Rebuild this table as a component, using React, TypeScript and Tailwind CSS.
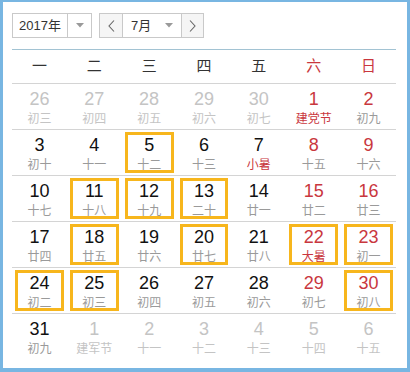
type Day = {
  n: number;
  sub: string;
  other?: boolean;
  red?: boolean;
  fest?: boolean;
  box?: boolean;
};

const weekdays = ['一', '二', '三', '四', '五', '六', '日'];

const rows: Day[][] = [
  [
    { n: 26, sub: '初三', other: true },
    { n: 27, sub: '初四', other: true },
    { n: 28, sub: '初五', other: true },
    { n: 29, sub: '初六', other: true },
    { n: 30, sub: '初七', other: true },
    { n: 1, sub: '建党节', red: true, fest: true },
    { n: 2, sub: '初九', red: true },
  ],
  [
    { n: 3, sub: '初十' },
    { n: 4, sub: '十一' },
    { n: 5, sub: '十二', box: true },
    { n: 6, sub: '十三' },
    { n: 7, sub: '小暑', fest: true },
    { n: 8, sub: '十五', red: true },
    { n: 9, sub: '十六', red: true },
  ],
  [
    { n: 10, sub: '十七' },
    { n: 11, sub: '十八', box: true },
    { n: 12, sub: '十九', box: true },
    { n: 13, sub: '二十', box: true },
    { n: 14, sub: '廿一' },
    { n: 15, sub: '廿二', red: true },
    { n: 16, sub: '廿三', red: true },
  ],
  [
    { n: 17, sub: '廿四' },
    { n: 18, sub: '廿五', box: true },
    { n: 19, sub: '廿六' },
    { n: 20, sub: '廿七', box: true },
    { n: 21, sub: '廿八' },
    { n: 22, sub: '大暑', red: true, fest: true, box: true },
    { n: 23, sub: '初一', red: true, box: true },
  ],
  [
    { n: 24, sub: '初二', box: true },
    { n: 25, sub: '初三', box: true },
    { n: 26, sub: '初四' },
    { n: 27, sub: '初五' },
    { n: 28, sub: '初六' },
    { n: 29, sub: '初七', red: true },
    { n: 30, sub: '初八', red: true, box: true },
  ],
  [
    { n: 31, sub: '初九' },
    { n: 1, sub: '建军节', other: true },
    { n: 2, sub: '十一', other: true },
    { n: 3, sub: '十二', other: true },
    { n: 4, sub: '十三', other: true },
    { n: 5, sub: '十四', other: true },
    { n: 6, sub: '十五', other: true },
  ],
];

function Caret() {
  return (
    <svg width="8" height="5" viewBox="0 0 8 5">
      <path d="M0 0 L8 0 L4 4.5 Z" fill="#9a9a9a" />
    </svg>
  );
}

function Chevron({ dir }: { dir: 'left' | 'right' }) {
  return (
    <svg width="7" height="12" viewBox="0 0 7 12">
      <path
        d={dir === 'left' ? 'M6 0.5 L1 6 L6 11.5' : 'M1 0.5 L6 6 L1 11.5'}
        fill="none"
        stroke="#666"
        strokeWidth="1.1"
      />
    </svg>
  );
}

function Cell({ d }: { d: Day }) {
  const numColor = d.other ? 'text-[#c4c4c4]' : d.red ? 'text-[#c9373e]' : 'text-[#111]';
  const subColor = d.other
    ? 'text-[#c4c4c4]'
    : d.fest
      ? 'text-[#c9373e]'
      : 'text-[#9a9a9a]';
  return (
    <div className="relative flex flex-col items-center pt-[5px]">
      <span className={`text-[18px] leading-[20px] ${numColor}`}>{d.n}</span>
      <span className={`mt-[2px] text-[12px] leading-[16px] ${subColor}`}>{d.sub}</span>
      {d.box && (
        <div className="absolute inset-x-[3px] inset-y-[2px] border-[3px] border-[#f7b61d]" />
      )}
    </div>
  );
}

export default function App() {
  return (
    <div
      className="h-[372px] w-[410px] overflow-hidden border-x-[3px] border-b-[4px] border-t-2 border-[#78b6e2] bg-white pl-[9px] pr-[11px] pt-[11px]"
      style={{ fontFamily: '"Liberation Sans", "Noto Sans CJK SC", sans-serif' }}
    >
      <div className="flex h-[25px] items-stretch gap-[7px] text-[13px] text-[#333]">
        <div className="flex w-[80px] border border-[#c9c9c9]">
          <div className="flex flex-1 items-center justify-center">2017年</div>
          <div className="flex w-[24px] items-center justify-center border-l border-[#c9c9c9]">
            <Caret />
          </div>
        </div>
        <div className="flex w-[105px] border border-[#c9c9c9]">
          <div className="flex w-[23px] items-center justify-center border-r border-[#c9c9c9] bg-[#f5f5f5]">
            <Chevron dir="left" />
          </div>
          <div className="flex flex-1 items-center justify-between pl-[8px] pr-[8px]">
            <span>7月</span>
            <Caret />
          </div>
          <div className="flex w-[22px] items-center justify-center border-l border-[#c9c9c9] bg-[#f5f5f5]">
            <Chevron dir="right" />
          </div>
        </div>
      </div>

      <div className="mt-[11px] h-px bg-[#a2c3d3]" />

      <div className="grid h-[33px] grid-cols-7 items-center text-[15px] text-[#333]">
        {weekdays.map((w, i) => (
          <div key={w} className={`text-center ${i >= 5 ? 'text-[#c9373e]' : ''}`}>
            {w}
          </div>
        ))}
      </div>

      {rows.map((row, ri) => (
        <div key={ri} className="grid h-[46px] grid-cols-7 border-t border-[#d4d4d4]">
          {row.map((d, ci) => (
            <Cell key={ci} d={d} />
          ))}
        </div>
      ))}
    </div>
  );
}
